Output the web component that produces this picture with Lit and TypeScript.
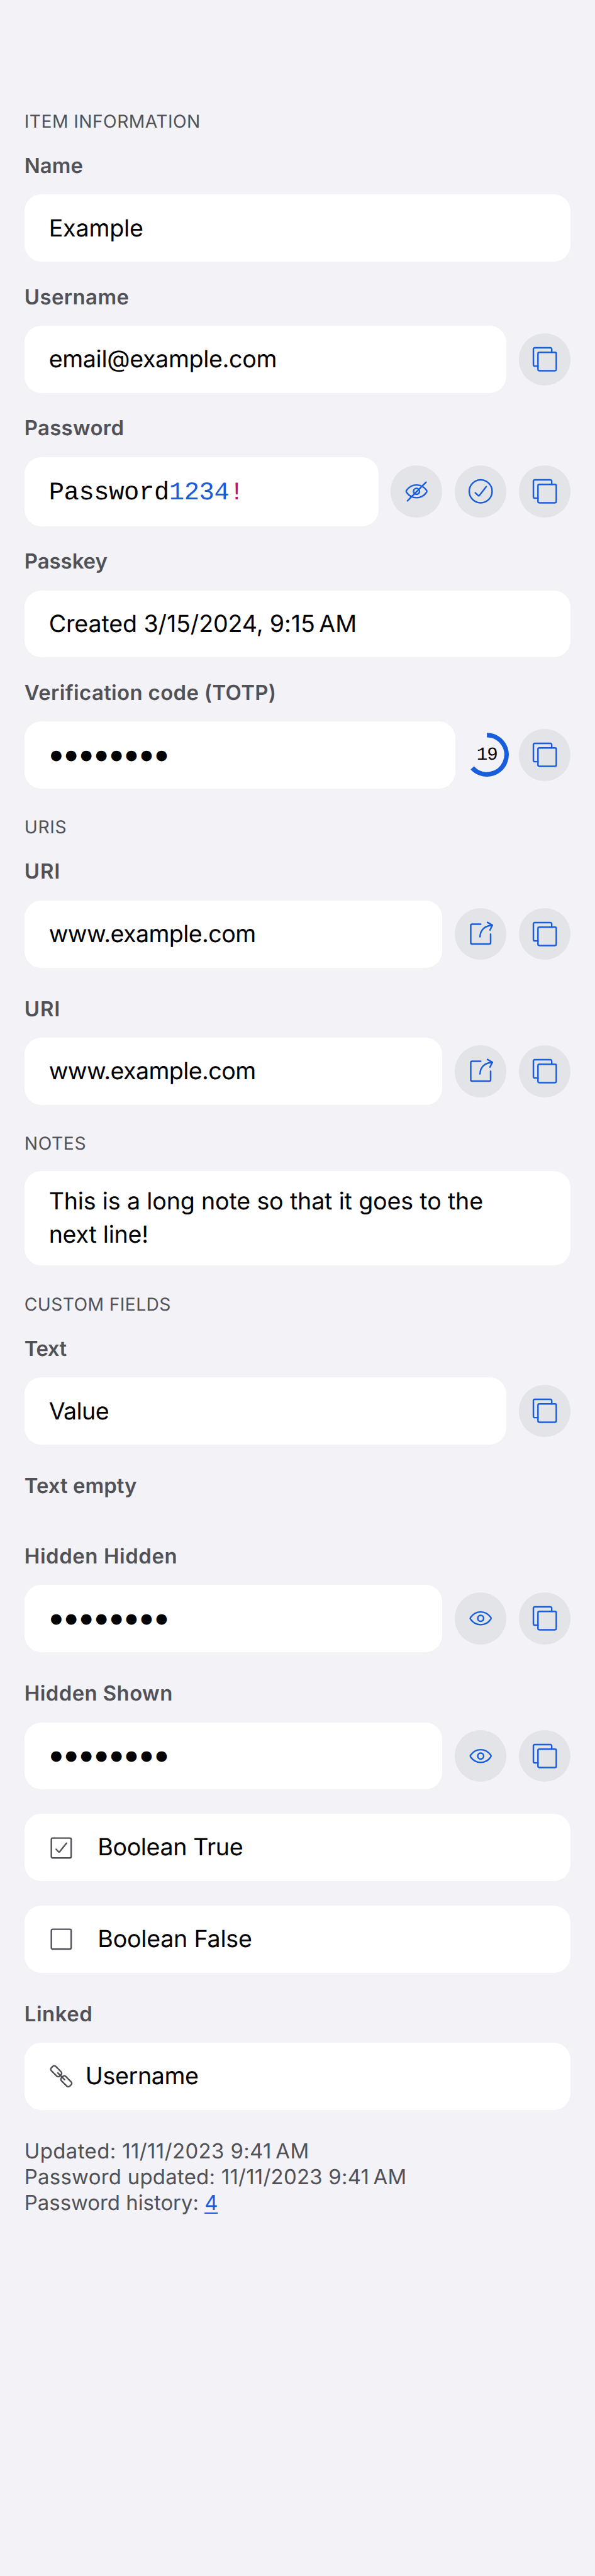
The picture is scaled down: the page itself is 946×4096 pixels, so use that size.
import { LitElement, html, css, svg, nothing } from "lit";
import type { TemplateResult } from "lit";

type IconName = "copy" | "check" | "eye" | "eyeSlash" | "share";

const eye = svg`
  <path d="M31.2 52.8Q30 51 31.2 49.2C36 42.5 43 38.5 51 38.5S66 42.5 70.8 49.2Q72 51 70.8 52.8C66 59.5 59 63.5 51 63.5S36 59.5 31.2 52.8Z" />
  <circle cx="51" cy="51" r="5.8" />`;

const icons: Record<IconName, TemplateResult> = {
  copy: svg`
    <rect x="37.5" y="37.5" width="36" height="36" rx="2.6" />
    <path d="M37.5 64.5H31.1A2.6 2.6 0 0 1 28.5 61.9V31.1A2.6 2.6 0 0 1 31.1 28.5H61.9A2.6 2.6 0 0 1 64.5 31.1V37.5" />`,
  check: svg`
    <circle cx="51" cy="51" r="22.5" />
    <path d="M40.5 53.9L46.3 59.4Q47.4 60.3 48.4 59L62 41.8" />`,
  eye,
  eyeSlash: svg`${eye}<path d="M33.2 69.8L69.8 33" />`,
  share: svg`
    <path d="M51 31.5H34.1A2.6 2.6 0 0 0 31.5 34.1V67.9A2.6 2.6 0 0 0 34.1 70.5H67.9A2.6 2.6 0 0 0 70.5 67.9V51" />
    <path d="M49.7 56.3C50 43 59 34.3 73.8 33.6" />
    <path d="M64.3 28L74 33.4L69.3 43" />`,
};

const box = svg`<rect x="4.5" y="4.5" width="39" height="39" rx="2.8" />`;
const glyphs = {
  checked: svg`${box}<path d="M14 26.6L18.6 31.5Q19.8 32.6 20.9 31.2L34.3 14.6" />`,
  unchecked: box,
  link: svg`
    <g transform="rotate(45 24 24)">
      <rect x="-1.5" y="18" width="23" height="12" rx="4" />
      <rect x="26.5" y="18" width="23" height="12" rx="4" />
      <path d="M14.6 24H33.4" />
    </g>`,
};

class IconButton extends LitElement {
  static properties = { name: {} };
  declare name: IconName;
  static styles = css`
    :host { display: block; flex: none; width: calc(102 * var(--u)); height: calc(102 * var(--u)); border-radius: 50%; background: #e2e4e8; }
    .art { display: block; width: 100%; height: 100%; fill: none; stroke: #175ddc; stroke-width: 3; stroke-linecap: round; stroke-linejoin: round; }
  `;
  render() {
    return html`<svg class="art" viewBox="0 0 102 102">${icons[this.name]}</svg>`;
  }
}
customElements.define("icon-button", IconButton);

class AppRoot extends LitElement {
  static styles = css`
    :host {
      --u: 0.8088px;
      display: block;
      box-sizing: border-box;
      min-height: 100vh;
      padding: calc(217.5 * var(--u)) calc(48 * var(--u)) 0;
      background: #f2f2f7;
      color: #000;
      font-family: Inter, "Liberation Sans", sans-serif;
      text-rendering: geometricPrecision;
      white-space: nowrap;
    }
    .section { display: flex; flex-direction: column; }
    .section + .section { margin-top: calc(55 * var(--u)); }
    .heading { margin-bottom: calc(31 * var(--u)); font-size: calc(34.9 * var(--u)); line-height: calc(44 * var(--u)); color: #515158; }
    .fields { display: flex; flex-direction: column; gap: calc(48 * var(--u)); }
    .fields.tight { gap: calc(36 * var(--u)); }
    .label { padding-top: calc(8 * var(--u)); margin-bottom: calc(32 * var(--u)); font-size: calc(40.7 * var(--u)); line-height: calc(50 * var(--u)); font-weight: 600; color: #515158; }
    .row { display: flex; align-items: center; gap: calc(24 * var(--u)); }
    .box {
      flex: 1;
      display: flex;
      align-items: center;
      box-sizing: border-box;
      height: calc(132 * var(--u));
      padding: calc(1 * var(--u)) calc(48 * var(--u)) 0;
      border-radius: calc(33 * var(--u));
      background: #fff;
      font-size: calc(46.5 * var(--u));
    }
    .box.secret { height: calc(136 * var(--u)); padding-top: calc(6 * var(--u)); font: calc(50 * var(--u)) "Liberation Mono", monospace; letter-spacing: calc(-0.45 * var(--u)); }
    .box.dots { padding-top: calc(5 * var(--u)); font: calc(48 * var(--u)) "Liberation Mono", monospace; letter-spacing: calc(0.8 * var(--u)); }
    .box.note { flex: none; height: calc(186 * var(--u)); line-height: calc(65.5 * var(--u)); }
    .digits { color: #175ddc; }
    .symbol { color: #c01176; }
    .glyph { width: calc(48 * var(--u)); height: calc(48 * var(--u)); overflow: visible; fill: none; stroke: #515158; stroke-width: 3; stroke-linecap: round; stroke-linejoin: round; }
    .glyph.wide { margin-right: calc(48 * var(--u)); }
    .glyph.near { margin-right: calc(24 * var(--u)); }
    .timer { display: grid; place-items: center; flex: none; width: calc(77 * var(--u)); height: calc(77 * var(--u)); font: calc(36 * var(--u)) "Liberation Mono", monospace; letter-spacing: calc(-1.2 * var(--u)); }
    .timer > * { grid-area: 1 / 1; }
    .ring { width: 100%; height: 100%; overflow: visible; fill: none; stroke: #175ddc; stroke-width: 9; }
    .footer { margin-top: calc(56 * var(--u)); font-size: calc(40.7 * var(--u)); line-height: calc(50.7 * var(--u)); color: #515158; }
    .history { color: #175ddc; text-decoration: underline; text-decoration-thickness: calc(3 * var(--u)); text-underline-offset: calc(5.5 * var(--u)); text-decoration-skip-ink: none; }
  `;

  private t(text: string, spacing = 0) {
    return html`<span style=${`letter-spacing:calc(${spacing} * var(--u))`}>${text}</span>`;
  }

  private field(label: unknown, content: unknown, actions: IconName[] = [], kind = "", extra: unknown = nothing) {
    return html`<div>
      ${label ? html`<div class="label">${label}</div>` : nothing}
      ${content
        ? html`<div class="row">
            <div class="box ${kind}">${content}</div>
            ${extra}${actions.map((a) => html`<icon-button .name=${a}></icon-button>`)}
          </div>`
        : nothing}
    </div>`;
  }

  private glyph(name: keyof typeof glyphs, gap: string) {
    return html`<svg class="glyph ${gap}" viewBox="0 0 48 48">${glyphs[name]}</svg>`;
  }

  private timer(left: number, period = 30) {
    const a = (left / period) * 2 * Math.PI;
    const x = 38.5 + 38.6 * Math.sin(a);
    const y = 38.5 - 38.6 * Math.cos(a);
    return html`<div class="timer">
      <svg class="ring" viewBox="0 0 77 77"><path d="M38.5 -0.1A38.6 38.6 0 ${a > Math.PI ? 1 : 0} 1 ${x} ${y}" /></svg>
      <span>${left}</span>
    </div>`;
  }

  render() {
    const t = this.t;
    const dots = "●".repeat(8);
    return html`
      <div class="section">
        <div class="heading">${t("ITEM INFORMATION", 0.56)}</div>
        <div class="fields tight">
          ${this.field(t("Name", 0.04), t("Example", -0.19))}
          ${this.field(t("Username", 0.5), t("email@example.com", -0.4), ["copy"])}
          ${this.field(
            t("Password", 0.37),
            html`<span>Password<span class="digits">1234</span><span class="symbol">!</span></span>`,
            ["eyeSlash", "check", "copy"],
            "secret",
          )}
          ${this.field(t("Passkey", -0.05), t("Created 3/15/2024, 9:15\u202FAM", -0.16))}
          ${this.field(t("Verification code (TOTP)", 0.44), dots, ["copy"], "dots", this.timer(19))}
        </div>
      </div>
      <div class="section">
        <div class="heading">${t("URIS", 0.84)}</div>
        <div class="fields">
          ${this.field(t("URI", 1.11), t("www.example.com", -0.74), ["share", "copy"])}
          ${this.field(t("URI", 1.11), t("www.example.com", -0.74), ["share", "copy"])}
        </div>
      </div>
      <div class="section">
        <div class="heading">${t("NOTES", 0.74)}</div>
        <div class="box note">
          <div>${t("This is a long note so that it goes to the", -0.19)}<br />${t("next line!", -0.3)}</div>
        </div>
      </div>
      <div class="section">
        <div class="heading">${t("CUSTOM FIELDS", 0.5)}</div>
        <div class="fields">
          ${this.field(t("Text", -0.56), t("Value", -0.72), ["copy"])}
          ${this.field(t("Text empty", 0.04), null)}
          ${this.field(t("Hidden Hidden", 0.71), dots, ["eye", "copy"], "dots")}
          ${this.field(t("Hidden Shown", 0.51), dots, ["eye", "copy"], "dots")}
          ${this.field(null, html`${this.glyph("checked", "wide")}${t("Boolean True", -0.46)}`)}
          ${this.field(null, html`${this.glyph("unchecked", "wide")}${t("Boolean False", -0.27)}`)}
          ${this.field(t("Linked", 0.65), html`${this.glyph("link", "near")}${t("Username", -0.44)}`)}
        </div>
      </div>
      <div class="footer">
        <div>${t("Updated: 11/11/2023 9:41\u202FAM", 0.5)}</div>
        <div>${t("Password updated: 11/11/2023 9:41\u202FAM", 0.32)}</div>
        <div>${t("Password history: ", -0.02)}<span class="history">4</span></div>
      </div>
    `;
  }
}
customElements.define("app-root", AppRoot);
